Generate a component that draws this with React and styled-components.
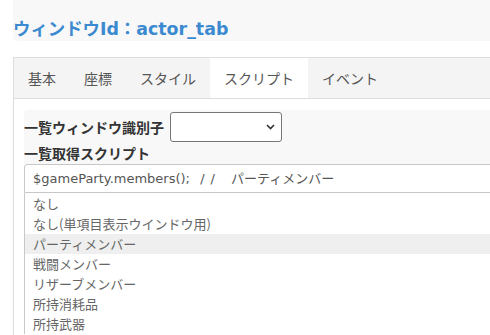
import React from 'react'
import styled, { createGlobalStyle } from 'styled-components'

const GlobalStyle = createGlobalStyle`
    body {
        margin: 0;
        overflow: hidden;
        background: #fff;
        font-family: "DejaVu Sans", "Noto Sans CJK JP", sans-serif;
    }
`

const Page = styled.div`
    width: 640px;
    padding-left: 13px;
`

const Header = styled.div`
    height: 41px;
    box-sizing: border-box;
    padding-top: 18px;
    background: #f8f8f8;
    border-radius: 0 0 0 5px;
`

const Title = styled.h1`
    margin: 0;
    font-size: 17.4px;
    line-height: 22px;
    font-weight: bold;
    color: #3b8ad0;
`

const TabBar = styled.ul`
    display: flex;
    margin: 16px 0 0;
    padding: 0;
    list-style: none;
    background: #f4f4f4;
    border-top: 1px solid #ddd;
    border-bottom: 1px solid #ddd;
    border-left: 1px solid #ddd;
`

const Tab = styled.li`
    padding: 0 14px;
    height: 40px;
    line-height: 40px;
    font-family: "Noto Sans CJK JP", sans-serif;
    font-size: 14px;
    color: #555;
    background: ${props => props.active ? '#fff' : 'transparent'};
`

const Content = styled.div`
    border-left: 1px solid #ddd;
    padding: 11px 0 0 10px;
    height: 240px;
`

const Panel = styled.div`
    background: #f8f8f8;
    border-radius: 4px 0 0 0;
`

const Row = styled.div`
    display: flex;
    align-items: center;
    padding-top: 2px;
`

const Label = styled.div`
    font-family: "Noto Sans CJK JP", sans-serif;
    font-size: 14px;
    font-weight: bold;
    color: #333;
    line-height: ${props => props.tall ? '22px' : '30px'};
`

const SelectBox = styled.div`
    position: relative;
    margin-left: 6px;
    width: 112px;
    height: 30px;
    box-sizing: border-box;
    border: 1px solid #767676;
    border-radius: 3px;
    background: #fff;

    svg {
        position: absolute;
        right: 6px;
        top: 11px;
    }
`

const ScriptInput = styled.div`
    height: 29px;
    box-sizing: border-box;
    border: 1px solid #c8c8c8;
    border-radius: 3px 0 0 0;
    padding-left: 8px;
    font-size: 13px;
    line-height: 27px;
    color: #555;
    white-space: pre;
    background: #fff;
`

const Comment = styled.span`
    letter-spacing: 6px;
`

const Options = styled.ul`
    margin: 0;
    padding: 1px 0 0;
    list-style: none;
    border-left: 1px solid #c8c8c8;
`

const Option = styled.li`
    height: 20px;
    line-height: 20px;
    padding-left: 8px;
    font-family: "Noto Sans CJK JP", sans-serif;
    font-size: 13px;
    color: #666;
    background: ${props => props.selected ? '#efefef' : 'transparent'};
`

const tabs = ['基本', '座標', 'スタイル', 'スクリプト', 'イベント']

const options = [
    'なし',
    'なし(単項目表示ウインドウ用)',
    'パーティメンバー',
    '戦闘メンバー',
    'リザーブメンバー',
    '所持消耗品',
    '所持武器',
]

const Chevron = () => (
    <svg width="9" height="6" viewBox="0 0 9 6">
        <path d="M1 1 L4.5 4.5 L8 1" fill="none" stroke="#333" strokeWidth="1.6" />
    </svg>
)

const App = () => {
    return (
        <Page>
            <GlobalStyle />
            <Header>
                <Title>ウィンドウId：actor_tab</Title>
            </Header>
            <TabBar>
                {tabs.map(t => <Tab key={t} active={t === 'スクリプト'}>{t}</Tab>)}
            </TabBar>
            <Content>
                <Panel>
                    <Row>
                        <Label>一覧ウィンドウ識別子</Label>
                        <SelectBox><Chevron /></SelectBox>
                    </Row>
                    <Label tall>一覧取得スクリプト</Label>
                </Panel>
                <ScriptInput>$gameParty.members();<Comment> // </Comment>パーティメンバー</ScriptInput>
                <Options>
                    {options.map((o, i) => <Option key={o} selected={i === 2}>{o}</Option>)}
                </Options>
            </Content>
        </Page>
    )
}

export default App
